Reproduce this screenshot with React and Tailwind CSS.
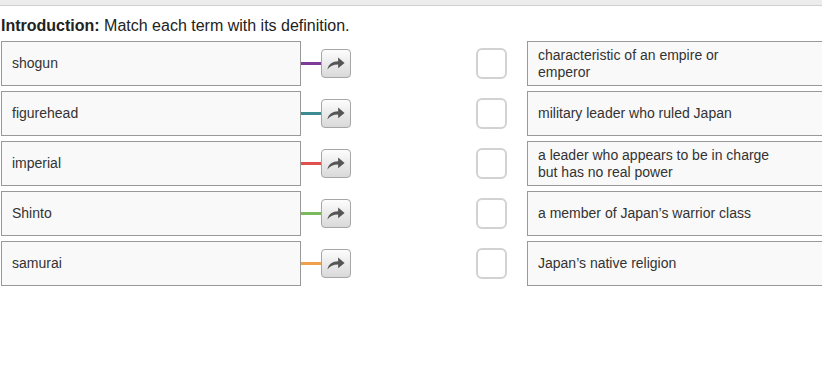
import React from "react";

const TERMS = [
  { term: "shogun", color: "bg-[#7d3c98]" },
  { term: "figurehead", color: "bg-[#3c8a92]" },
  { term: "imperial", color: "bg-[#e0504c]" },
  { term: "Shinto", color: "bg-[#7cb95c]" },
  { term: "samurai", color: "bg-[#f0a04b]" },
];

const DEFS = [
  "characteristic of an empire or emperor",
  "military leader who ruled Japan",
  "a leader who appears to be in charge but has no real power",
  "a member of Japan’s warrior class",
  "Japan’s native religion",
];

const ArrowButton = () => (
  <div className="w-[30px] h-[29px] shrink-0 rounded-[4px] border border-[#a6a6a6] bg-gradient-to-b from-[#fdfdfd] to-[#d9d9d9] flex items-center justify-center">
    <svg width="20" height="15" viewBox="0 0 18 14">
      <path
        d="M1 12.5 C2 7.5 6 5 11 5 V1.5 L17 6.5 L11 11.5 V8 C6.5 8 3.5 9.5 1 12.5 Z"
        fill="#555"
      />
    </svg>
  </div>
);

const App = () => {
  return (
    <div className="w-[822px] h-[387px] overflow-hidden bg-white font-['Liberation_Sans',Arial,sans-serif] text-[#333]">
      <div className="h-[6px] bg-[#ececec] border-b border-[#cfcfcf]"></div>
      <div className="pl-[1px] pt-[10px]">
        <div className="text-[16px] leading-[20px] mb-[5px] text-[#222]">
          <span className="font-bold">Introduction:</span> Match each term with
          its definition.
        </div>
        <div className="flex flex-col gap-[5px]">
          {TERMS.map((t, i) => (
            <div key={t.term} className="flex items-center">
              <div className="w-[300px] h-[45px] shrink-0 border border-[#999] bg-[#f9f9f9] flex items-center pl-[10px] text-[14px]">
                {t.term}
              </div>
              <div className={`w-[20px] h-[3px] shrink-0 ${t.color}`}></div>
              <ArrowButton />
              <div className="ml-[125px] w-[31px] h-[31px] shrink-0 rounded-[6px] border-2 border-[#d2d2d2] bg-white"></div>
              <div className="ml-[20px] w-[300px] h-[45px] shrink-0 border border-[#999] bg-[#f9f9f9] flex items-center pl-[10px] text-[14px] leading-[17px]">
                <div className="max-w-[234px]">{DEFS[i]}</div>
              </div>
            </div>
          ))}
        </div>
      </div>
    </div>
  );
};

export default App;
